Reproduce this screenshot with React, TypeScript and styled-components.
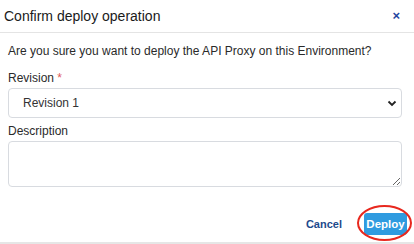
import React from 'react';
import styled, { createGlobalStyle } from 'styled-components';

const GlobalStyle = createGlobalStyle`
    html, body {
        margin: 0;
        padding: 0;
        background: #ffffff;
    }
    body {
        font-family: "Liberation Sans", Arial, sans-serif;
        color: #222;
    }
`;

export default function App() {
    return (
        <>
            <GlobalStyle />
            <Modal>
                <Header>
                    <Title>Confirm deploy operation</Title>
                    <CloseButton aria-label="close">×</CloseButton>
                </Header>
                <Body>
                    <Question>Are you sure you want to deploy the API Proxy on this Environment?</Question>
                    <Field>
                        <Label>
                            Revision <Required>*</Required>
                        </Label>
                        <SelectBox>
                            <span>Revision 1</span>
                            <svg width="10" height="7" viewBox="0 0 10 7">
                                <path d="M1.5 1.5 L5 5 L8.5 1.5" fill="none" stroke="#222" strokeWidth="1.8" />
                            </svg>
                        </SelectBox>
                    </Field>
                    <Field>
                        <Label>Description</Label>
                        <TextArea />
                    </Field>
                </Body>
                <Footer>
                    <CancelButton>Cancel</CancelButton>
                    <Highlight>
                        <DeployButton>Deploy</DeployButton>
                        <Ring />
                    </Highlight>
                </Footer>
            </Modal>
        </>
    );
}

const Modal = styled.div`
    width: 414px;
    height: 244px;
    display: flex;
    flex-direction: column;
    border-bottom: 2px solid #e6e6e6;
    box-sizing: border-box;
`;

const Header = styled.div`
    height: 31px;
    display: flex;
    align-items: center;
    justify-content: space-between;
    padding: 0 14px 1px 4px;
    border-bottom: 1px solid #e4e4e4;
`;

const Title = styled.h2`
    margin: 0;
    font-size: 14px;
    font-weight: 400;
    color: #1a1a1a;
`;

const CloseButton = styled.button`
    border: none;
    background: none;
    padding: 0;
    font-family: inherit;
    font-size: 13px;
    font-weight: 700;
    line-height: 1;
    color: #2345a0;
`;

const Body = styled.div`
    display: flex;
    flex-direction: column;
    padding: 11px 12px 0 8px;
    gap: 6px;
`;

const Question = styled.p`
    margin: 0 0 6px;
    font-size: 12px;
    line-height: 15px;
    white-space: nowrap;
    color: #2a2a2a;
`;

const Field = styled.div`
    display: flex;
    flex-direction: column;
    gap: 3px;
`;

const Label = styled.label`
    font-size: 12px;
    line-height: 14px;
    color: #2a2a2a;
`;

const Required = styled.span`
    color: #e05a5a;
`;

const SelectBox = styled.div`
    height: 30px;
    box-sizing: border-box;
    border: 1px solid #d8dbe0;
    border-radius: 4px;
    display: flex;
    align-items: center;
    justify-content: space-between;
    padding: 0 4px 0 14px;
    font-size: 12px;
    color: #333;
`;

const TextArea = styled.textarea`
    height: 46px;
    box-sizing: border-box;
    border: 1px solid #d8dbe0;
    border-radius: 4px;
    resize: vertical;
    font-family: inherit;
`;

const Footer = styled.div`
    margin-top: auto;
    display: flex;
    align-items: center;
    justify-content: flex-end;
    gap: 22px;
    padding: 0 7px 7px 0;
`;

const CancelButton = styled.button`
    border: none;
    background: none;
    padding: 0;
    font-family: inherit;
    font-size: 11px;
    font-weight: 700;
    color: #1d4a8c;
`;

const Highlight = styled.div`
    position: relative;
`;

const DeployButton = styled.button`
    width: 43px;
    height: 22px;
    border: none;
    border-radius: 3px;
    background: #2f9be0;
    color: #fff;
    font-family: inherit;
    font-size: 11.5px;
    font-weight: 700;
    padding: 0;
`;

const Ring = styled.span`
    position: absolute;
    left: -7px;
    top: -8px;
    width: 55px;
    height: 36px;
    border: 2px solid #e8281e;
    border-radius: 50%;
    box-sizing: border-box;
    pointer-events: none;
`;
